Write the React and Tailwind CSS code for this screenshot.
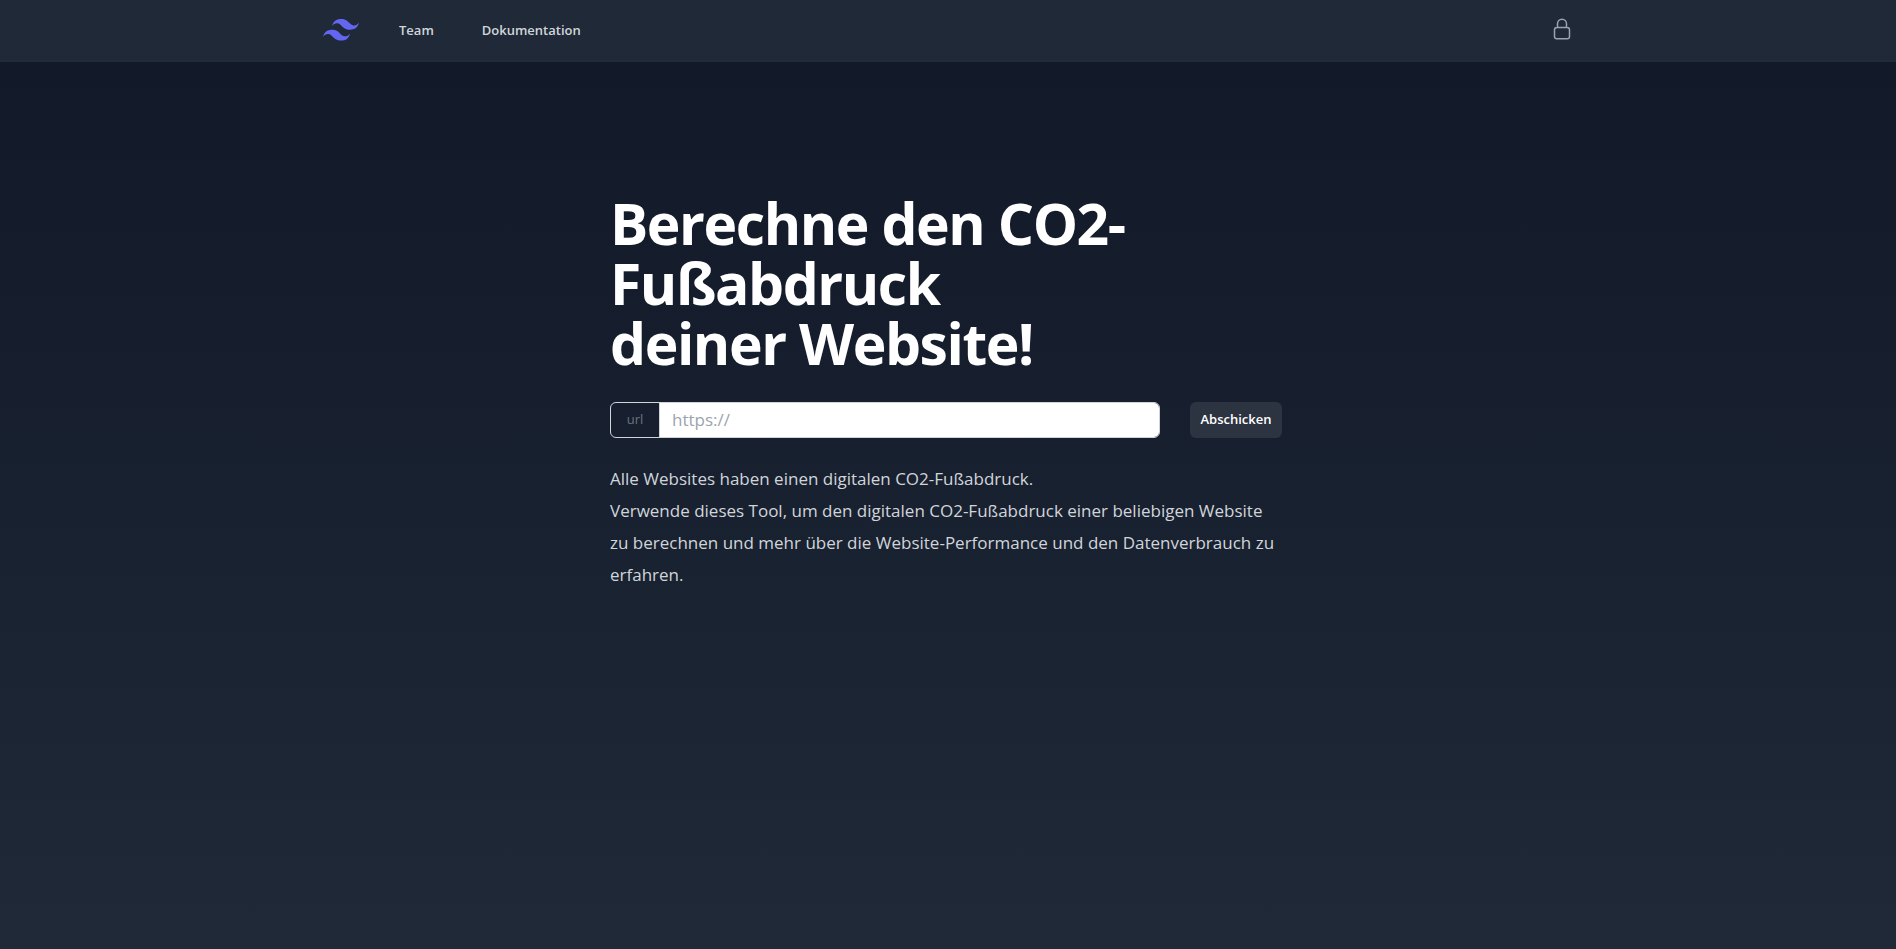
import React from "react";

function Logo() {
  return (
    <svg className="w-9 h-[22px]" viewBox="0 0 54 33" fill="#6366f1" aria-hidden="true">
      <path d="M27 0c-7.2 0-11.7 3.6-13.5 10.8 2.7-3.6 5.85-4.95 9.45-4.05 2.054.513 3.522 2.004 5.147 3.653C30.744 13.09 33.808 16.2 40.5 16.2c7.2 0 11.7-3.6 13.5-10.8-2.7 3.6-5.85 4.95-9.45 4.05-2.054-.513-3.522-2.004-5.147-3.653C36.756 3.11 33.692 0 27 0zM13.5 16.2C6.3 16.2 1.8 19.8 0 27c2.7-3.6 5.85-4.95 9.45-4.05 2.054.514 3.522 2.004 5.147 3.653C17.244 29.29 20.308 32.4 27 32.4c7.2 0 11.7-3.6 13.5-10.8-2.7 3.6-5.85 4.95-9.45 4.05-2.054-.513-3.522-2.004-5.147-3.653C23.256 19.31 20.192 16.2 13.5 16.2z" />
    </svg>
  );
}

function Header() {
  return (
    <header className="bg-[#1f2937] border-b-2 border-[#212c3a]">
      <nav className="max-w-[1280px] mx-auto h-[60px] pl-[15px] pr-[14px] flex items-center justify-between">
        <div className="flex items-center">
          <a href="#" aria-label="Start" className="mr-10">
            <Logo />
          </a>
          <div className="flex gap-12 text-[13px] leading-5 font-semibold text-[#d1d5db]">
            <a href="#team">Team</a>
            <a href="#dokumentation">Dokumentation</a>
          </div>
        </div>
        <a href="#login" aria-label="Login" className="text-[#9ca3af] pb-[2px]">
          <svg className="w-6 h-6" viewBox="0 0 24 24" fill="none" stroke="currentColor" strokeWidth="1.5" strokeLinecap="round" strokeLinejoin="round">
            <path d="M16.5 10.5V6.75a4.5 4.5 0 1 0-9 0v3.75m-.75 11.25h10.5a2.25 2.25 0 0 0 2.25-2.25v-6.75a2.25 2.25 0 0 0-2.25-2.25H6.75a2.25 2.25 0 0 0-2.25 2.25v6.75a2.25 2.25 0 0 0 2.25 2.25Z" />
          </svg>
        </a>
      </nav>
    </header>
  );
}

function App() {
  return (
    <div className="min-h-screen flex flex-col bg-linear-to-b from-[#111827] to-[#1f2937] font-['Open_Sans','Noto_Sans',sans-serif]">
      <Header />
      <main className="w-full max-w-[676px] mx-auto pt-[131px] pr-1">
        <h1 className="text-[57px] leading-[60px] font-bold tracking-tight text-white">
          Berechne den CO2-Fußabdruck
          <br />
          deiner Website!
        </h1>
        <form className="mt-[29px] flex items-center gap-[30px]" onSubmit={(e) => e.preventDefault()}>
          <div className="flex flex-1 h-9 rounded-md border border-[#d1d5db] overflow-hidden">
            <label htmlFor="url" className="w-12 flex items-center justify-center text-[13px] text-[#6b7280]">
              url
            </label>
            <input
              id="url"
              type="text"
              placeholder="https://"
              className="flex-1 min-w-0 bg-white border-l border-[#d1d5db] px-3 text-[17px] text-gray-900 placeholder:text-[#9ca3af] outline-none"
            />
          </div>
          <button type="submit" className="h-9 w-[92px] rounded-md bg-[#2d3441] text-[13px] font-semibold text-white">
            Abschicken
          </button>
        </form>
        <p className="mt-[25px] text-[17px] leading-8 text-[#d1d5db]">
          Alle Websites haben einen digitalen CO2-Fußabdruck.
          <br />
          Verwende dieses Tool, um den digitalen CO2-Fußabdruck einer beliebigen Website zu berechnen und mehr über die
          Website-Performance und den Datenverbrauch zu erfahren.
        </p>
      </main>
    </div>
  );
}

export default App;
